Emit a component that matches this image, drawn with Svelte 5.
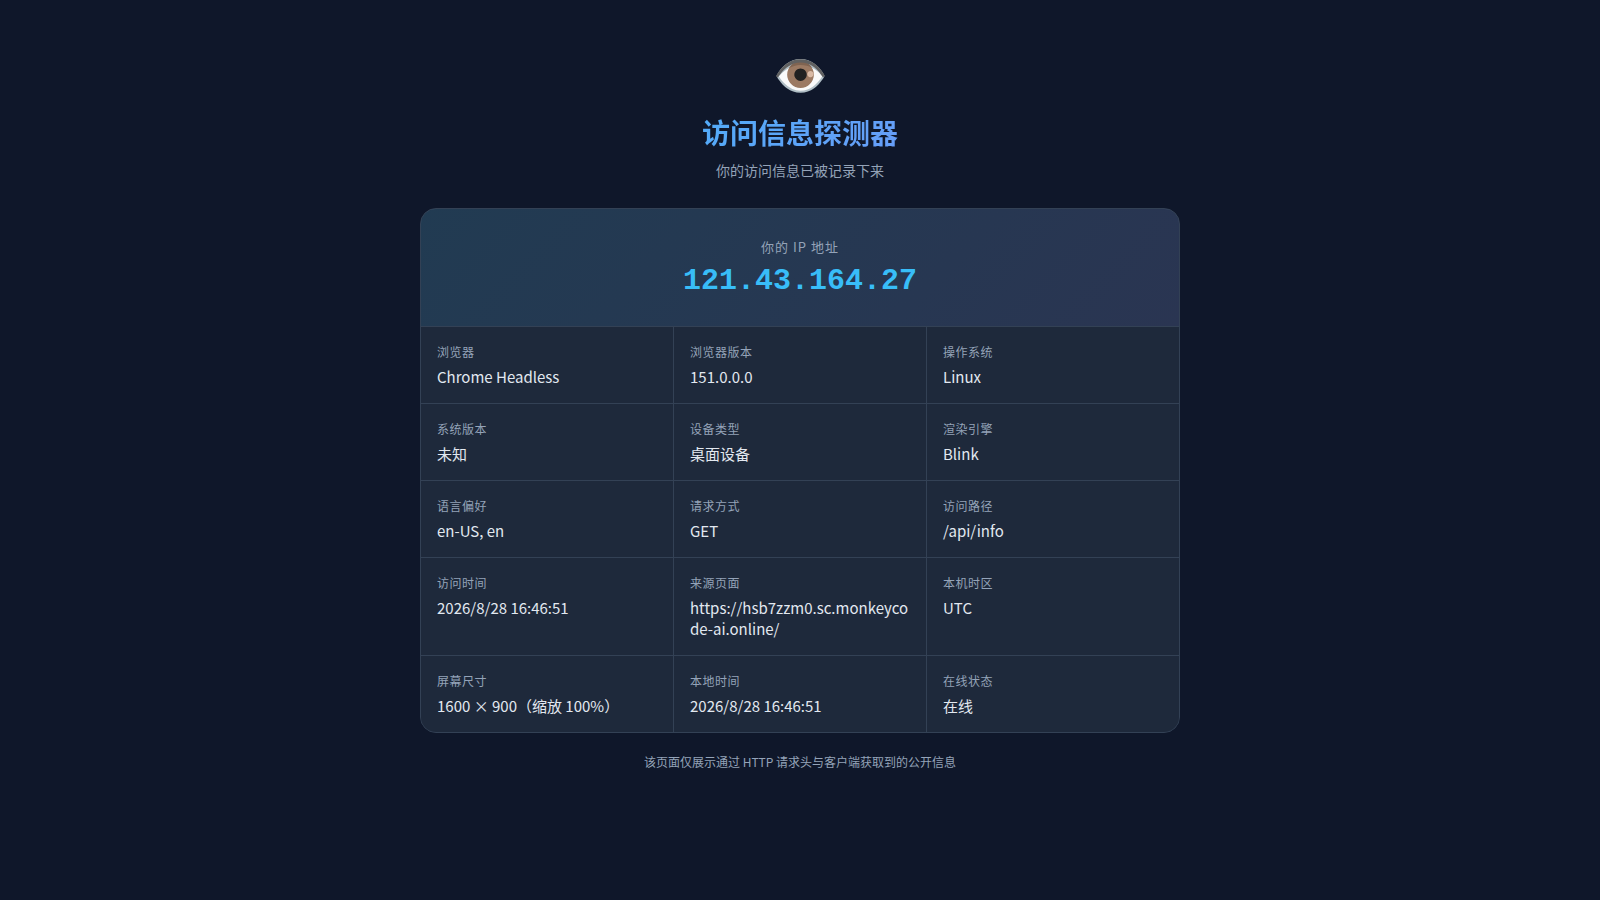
<script>
  const items = [
    ['浏览器', 'Chrome Headless'],
    ['浏览器版本', '151.0.0.0'],
    ['操作系统', 'Linux'],
    ['系统版本', '未知'],
    ['设备类型', '桌面设备'],
    ['渲染引擎', 'Blink'],
    ['语言偏好', 'en-US, en'],
    ['请求方式', 'GET'],
    ['访问路径', '/api/info'],
    ['访问时间', '2026/8/28 16:46:51'],
    ['来源页面', 'https://hsb7zzm0.sc.monkeycode-ai.online/'],
    ['本机时区', 'UTC'],
    ['屏幕尺寸', '1600 × 900（缩放 100%）'],
    ['本地时间', '2026/8/28 16:46:51'],
    ['在线状态', '在线'],
  ];
</script>

<main class="page">
  <div class="container">
    <header>
      <div class="emoji">👁️</div>
      <h1>访问信息探测器</h1>
      <p>你的访问信息已被记录下来</p>
    </header>

    <section class="card">
      <div class="ip">
        <div class="ip-label">你的 IP 地址</div>
        <div class="ip-value">121.43.164.27</div>
      </div>
      <dl class="grid">
        {#each items as [label, value]}
          <div class="cell">
            <dt>{label}</dt>
            <dd>{value}</dd>
          </div>
        {/each}
      </dl>
    </section>

    <footer>该页面仅展示通过 HTTP 请求头与客户端获取到的公开信息</footer>
  </div>
</main>

<style>
  :global(body) {
    margin: 0;
    background: #0f172a;
  }

  .page {
    box-sizing: border-box;
    min-height: 100vh;
    display: flex;
    justify-content: center;
    padding: 48px 20px;
    color: #e2e8f0;
    font-family: 'Noto Sans CJK SC', sans-serif;
  }

  .container {
    width: 100%;
    max-width: 760px;
  }

  header {
    text-align: center;
    margin-bottom: 28px;
  }

  .emoji {
    font-size: 44px;
    line-height: 48px;
    margin-bottom: 16px;
  }

  h1 {
    margin: 0 0 8px;
    font-size: 28px;
    line-height: 40px;
    font-weight: 700;
    background: linear-gradient(135deg, #38bdf8, #818cf8);
    -webkit-background-clip: text;
    background-clip: text;
    color: transparent;
  }

  header p {
    margin: 0;
    font-size: 14px;
    line-height: 20px;
    color: #94a3b8;
  }

  .card {
    overflow: hidden;
    background: #1e293b;
    border: 1px solid #334155;
    border-radius: 16px;
  }

  .ip {
    padding: 28px 24px;
    text-align: center;
    border-bottom: 1px solid #334155;
    background: linear-gradient(135deg, rgba(56, 189, 248, 0.12), rgba(129, 140, 248, 0.12));
  }

  .ip-label {
    margin-bottom: 8px;
    font-size: 13px;
    line-height: 19px;
    letter-spacing: 1px;
    color: #94a3b8;
  }

  .ip-value {
    font-family: 'Liberation Mono', monospace;
    font-size: 30px;
    line-height: 34px;
    font-weight: 700;
    color: #38bdf8;
  }

  .grid {
    display: grid;
    grid-template-columns: repeat(3, 1fr);
    gap: 1px;
    margin: 0;
    background: #334155;
  }

  .cell {
    padding: 16px;
    background: #1e293b;
  }

  dt {
    margin-bottom: 6px;
    font-size: 12px;
    line-height: 17px;
    letter-spacing: 0.5px;
    color: #94a3b8;
  }

  dd {
    margin: 0;
    font-size: 15px;
    line-height: 21px;
    word-break: break-all;
  }

  footer {
    margin-top: 20px;
    text-align: center;
    font-size: 12px;
    line-height: 18px;
    color: #94a3b8;
  }
</style>
